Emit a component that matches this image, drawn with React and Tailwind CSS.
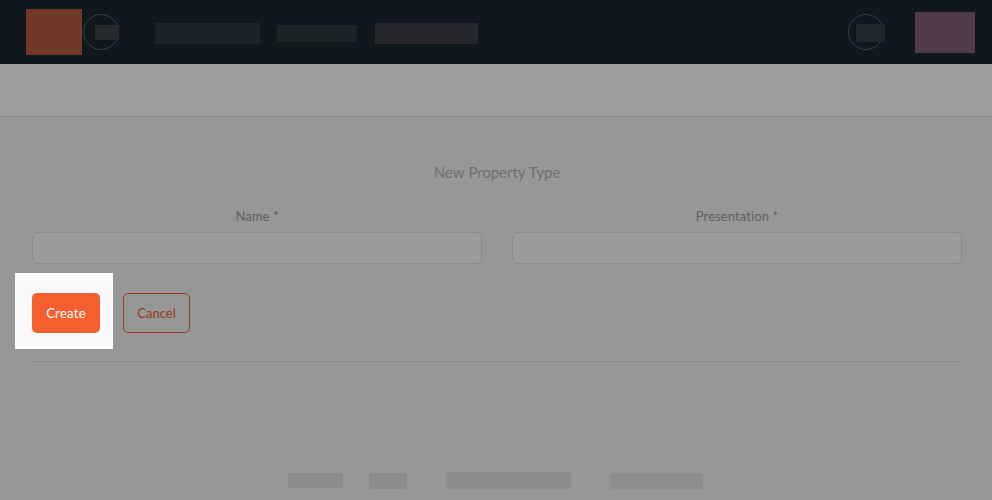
function Block({ className }) {
  return <div className={`shrink-0 ${className}`} />;
}

function Field({ label }) {
  return (
    <label className="flex flex-1 flex-col items-center text-[13px] leading-5 text-[#5f5f5f]">
      <span className="tracking-[0.1px]">{label}</span>
      <input
        type="text"
        className="mt-1.5 h-8 w-full rounded-[5px] border border-[#8c8c8c] bg-[#9b9b9b] outline-none"
      />
    </label>
  );
}

function Header() {
  return (
    <header className="flex h-16 items-start bg-[#10181d] pl-[26px] pr-[17px]">
      <Block className="mt-[9px] h-[46px] w-14 bg-[#723929]" />
      <div className="ml-px mt-3.5 h-9 w-9 shrink-0 rounded-full border border-[#3d4043] pl-[11px] pt-2.5">
        <Block className="h-[15px] w-6 bg-[#252a2c]" />
      </div>
      <Block className="ml-9 mt-[23px] h-[21px] w-[105px] bg-[#1c232a]" />
      <Block className="ml-[17px] mt-[25px] h-[17px] w-20 bg-[#1c2426]" />
      <Block className="ml-[18px] mt-[23px] h-[21px] w-[103px] bg-[#26272a]" />
      <div className="ml-auto mt-3.5 h-9 w-9 shrink-0 rounded-full border border-[#3d4043] pl-[7px] pt-[9px]">
        <Block className="h-[18px] w-[29px] bg-[#1f272b]" />
      </div>
      <Block className="ml-[31px] mt-3 h-[41px] w-[60px] bg-[#503b4e]" />
    </header>
  );
}

export default function App() {
  return (
    <div className="flex h-[500px] w-[992px] flex-col overflow-hidden bg-[#979797] font-['Lato',sans-serif] [font-variant-ligatures:none]">
      <Header />
      <div className="h-[53px] shrink-0 border-b border-[#858585] bg-[#9c9c9c]" />
      <main className="flex flex-col pl-8 pr-[30px]">
        <h1 className="mt-[45px] text-center text-[15px] leading-5 tracking-[-0.05px] text-[#707070] [word-spacing:0.5px]">
          New Property Type
        </h1>
        <div className="mt-6 flex gap-[30px]">
          <Field label="Name *" />
          <Field label="Presentation *" />
        </div>
        <div className="-ml-[17px] mt-[9px] flex h-[76px] items-start gap-2.5 text-[13px] leading-5">
          <div className="h-[76px] w-[98px] bg-[#fafafa] pl-[17px] pt-5">
            <button className="h-10 w-[68px] rounded-[5px] bg-[#f45f30] pb-px tracking-[0.3px] text-white">
              Create
            </button>
          </div>
          <button className="mt-5 h-10 w-[67px] rounded-[5px] border border-[#983a1b] pb-px text-[#983a1b]">
            Cancel
          </button>
        </div>
        <div className="-ml-px mr-px mt-3 h-px bg-[#8c8c8c]" />
      </main>
      <footer className="mt-[110px] flex items-start pl-72">
        <Block className="mt-px h-[15px] w-[55px] bg-[#8c8c8c]" />
        <Block className="ml-[26px] mt-px h-4 w-[38px] bg-[#8c8c8c]" />
        <Block className="ml-[39px] h-[17px] w-[125px] bg-[#8d8d8d]" />
        <Block className="ml-[39px] mt-px h-4 w-[93px] bg-[#8d8e8d]" />
      </footer>
    </div>
  );
}
